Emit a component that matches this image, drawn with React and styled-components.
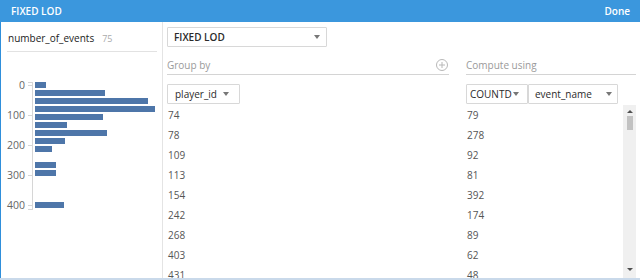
import React from 'react';
import styled, { createGlobalStyle } from 'styled-components';

const GlobalStyle = createGlobalStyle`
  html, body {
    margin: 0;
    padding: 0;
    background: #ffffff;
    overflow: hidden;
  }
  body {
    font-family: "Open Sans", "Liberation Sans", sans-serif;
  }
  * {
    box-sizing: border-box;
  }
`;

const Frame = styled.div`
  width: 640px;
  height: 280px;
  display: flex;
  flex-direction: column;
  border-bottom: 2px solid #c9d9ea;
  background: #ffffff;
`;

const Header = styled.div`
  height: 22px;
  flex-shrink: 0;
  display: flex;
  align-items: center;
  justify-content: space-between;
  padding: 0 10px 0 11px;
  background: #3b97dd;
  color: #ffffff;
  font-size: 10px;
  font-weight: 600;
`;

const HeaderAction = styled.span`
  cursor: pointer;
`;

const Body = styled.div`
  flex: 1;
  min-height: 0;
  display: flex;
  border-left: 1px solid #2f8fdb;
`;

const FieldPanel = styled.div`
  width: 162px;
  flex-shrink: 0;
  border-right: 1px solid #e4e4e4;
  display: flex;
  flex-direction: column;
`;

const FieldTitle = styled.div`
  margin: 0 5px 0 6px;
  padding: 4px 0 0 1px;
  height: 30px;
  line-height: 25px;
  border-bottom: 1px solid #e2e2e2;
  font-size: 10px;
  color: #222;
  white-space: nowrap;
`;

const FieldCount = styled.span`
  margin-left: 8px;
  font-size: 9px;
  color: #aaa;
`;

const Chart = styled.svg`
  display: block;
  font-family: "Open Sans", "Liberation Sans", sans-serif;
`;

const Main = styled.div`
  flex: 1;
  min-width: 0;
  display: flex;
  flex-direction: column;
  padding: 5px 4px 0 4px;
`;

const Dropdown = styled.div`
  width: ${p => p.width}px;
  height: 20px;
  flex-shrink: 0;
  display: flex;
  align-items: center;
  justify-content: space-between;
  padding: 0 ${p => p.padRight}px 0 ${p => p.padLeft}px;
  border: 1px solid #d8d8d8;
  border-radius: 1px;
  background: #fff;
  font-size: 10px;
  font-weight: ${p => (p.bold ? 600 : 500)};
  color: #2a2a2a;
  white-space: nowrap;
  overflow: hidden;
  cursor: pointer;
`;

const Caret = styled.span`
  width: 0;
  height: 0;
  flex-shrink: 0;
  border-left: 3px solid transparent;
  border-right: 3px solid transparent;
  border-top: 4px solid #777;
`;

const Sections = styled.div`
  display: grid;
  grid-template-columns: 282px 1fr;
  column-gap: 17px;
  margin-top: 8px;
`;

const Section = styled.div`
  display: flex;
  flex-direction: column;
  min-width: 0;
`;

const SectionHead = styled.div`
  height: 20px;
  display: flex;
  align-items: center;
  justify-content: space-between;
  padding-right: 1px;
  border-bottom: 1px solid #d4d4d4;
  font-size: 10px;
  color: #9a9a9a;
`;

const Controls = styled.div`
  display: flex;
  margin-top: 9px;
`;

const List = styled.div`
  flex: 1;
  min-height: 0;
  display: flex;
  margin-top: 1px;
  overflow: hidden;
`;

const Rows = styled.div`
  flex: 1;
  min-width: 0;
`;

const Row = styled.div`
  height: 20px;
  display: grid;
  grid-template-columns: 282px 1fr;
  column-gap: 17px;
  align-items: center;
  padding-left: 1px;
  font-size: 10px;
  color: #555;
`;

const Scrollbar = styled.div`
  width: 13px;
  flex-shrink: 0;
  display: flex;
  flex-direction: column;
  align-items: center;
  background: #f0f0f0;
  padding: 5px 0 7px;
`;

const ScrollArrow = styled.span`
  width: 0;
  height: 0;
  border-left: 3px solid transparent;
  border-right: 3px solid transparent;
  ${p => (p.up ? 'border-bottom: 3px solid #505050;' : 'border-top: 3px solid #505050;')}
`;

const ScrollThumb = styled.div`
  width: 6px;
  height: 14px;
  margin-top: 3px;
  background: #c2c2c2;
`;

const ScrollSpace = styled.div`
  flex: 1;
`;

const bins = [
  { y: 30, w: 11 },
  { y: 38, w: 70 },
  { y: 46, w: 113 },
  { y: 54, w: 120 },
  { y: 62, w: 68 },
  { y: 70, w: 32 },
  { y: 78, w: 72 },
  { y: 86, w: 30 },
  { y: 94, w: 17 },
  { y: 110, w: 21 },
  { y: 118, w: 21 },
  { y: 150, w: 29 },
];

const ticks = [
  { y: 33, label: '0' },
  { y: 63, label: '100' },
  { y: 93, label: '200' },
  { y: 123, label: '300' },
  { y: 153, label: '400' },
];

const rows = [
  ['74', '79'],
  ['78', '278'],
  ['109', '92'],
  ['113', '81'],
  ['154', '392'],
  ['242', '174'],
  ['268', '89'],
  ['403', '62'],
  ['431', '48'],
];

function AddIcon() {
  return (
    <svg width="12" height="12" viewBox="0 0 12 12">
      <circle cx="6" cy="6" r="5.5" fill="none" stroke="#b8b8b8" strokeWidth="1" />
      <path d="M6 3v6M3 6h6" stroke="#b8b8b8" strokeWidth="1" />
    </svg>
  );
}

function Histogram() {
  return (
    <Chart width="161" height="170" viewBox="0 0 161 170">
      <line x1="31.5" y1="30" x2="31.5" y2="158" stroke="#d6d6d6" />
      <line x1="27" y1="30.5" x2="31" y2="30.5" stroke="#d6d6d6" />
      <line x1="27" y1="157.5" x2="31" y2="157.5" stroke="#d6d6d6" />
      {ticks.map(t => (
        <g key={t.label}>
          <line x1="27" y1={t.y + 0.5} x2="31" y2={t.y + 0.5} stroke="#d6d6d6" />
          <text x="24" y={t.y + 4} textAnchor="end" fontSize="10.5" fill="#666">
            {t.label}
          </text>
        </g>
      ))}
      {bins.map(b => (
        <rect key={b.y} x="34" y={b.y} width={b.w} height="6" fill="#4e76a9" />
      ))}
    </Chart>
  );
}

export default function App() {
  return (
    <>
      <GlobalStyle />
      <Frame>
        <Header>
          <span>FIXED LOD</span>
          <HeaderAction>Done</HeaderAction>
        </Header>
        <Body>
          <FieldPanel>
            <FieldTitle>
              number_of_events<FieldCount>75</FieldCount>
            </FieldTitle>
            <Histogram />
          </FieldPanel>
          <Main>
            <Dropdown width={160} padLeft={6} padRight={6} bold>
              FIXED LOD
              <Caret />
            </Dropdown>
            <Sections>
              <Section>
                <SectionHead>
                  Group by
                  <AddIcon />
                </SectionHead>
                <Controls>
                  <Dropdown width={73} padLeft={7} padRight={10}>
                    player_id
                    <Caret />
                  </Dropdown>
                </Controls>
              </Section>
              <Section>
                <SectionHead>Compute using</SectionHead>
                <Controls>
                  <Dropdown width={62} padLeft={3} padRight={8}>
                    COUNTD
                    <Caret />
                  </Dropdown>
                  <Dropdown width={90} padLeft={6} padRight={5}>
                    event_name
                    <Caret />
                  </Dropdown>
                </Controls>
              </Section>
            </Sections>
            <List>
              <Rows>
                {rows.map(([id, count], i) => (
                  <Row key={i}>
                    <span>{id}</span>
                    <span>{count}</span>
                  </Row>
                ))}
              </Rows>
              <Scrollbar>
                <ScrollArrow up />
                <ScrollThumb />
                <ScrollSpace />
                <ScrollArrow />
              </Scrollbar>
            </List>
          </Main>
        </Body>
      </Frame>
    </>
  );
}
